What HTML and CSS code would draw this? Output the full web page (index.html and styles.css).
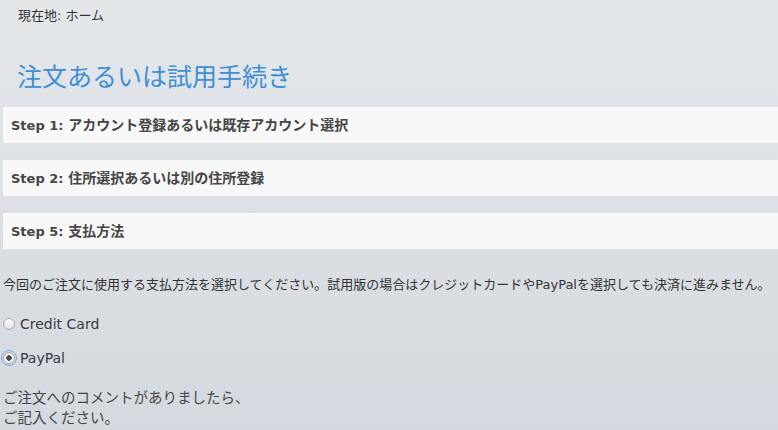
FILE: index.html
```html
<!DOCTYPE html>
<html lang="ja">
<head>
  <meta charset="UTF-8">
  <title>注文あるいは試用手続き</title>
  <link rel="stylesheet" href="styles.css">
</head>
<body>
  <div class="page">
    <!-- Breadcrumb -->
    <div class="breadcrumb">現在地: ホーム</div>

    <h1 class="title">注文あるいは試用手続き</h1>

    <!-- Checkout steps -->
    <div class="steps">
      <div class="step"><span class="step-no">Step 1:</span> アカウント登録あるいは既存アカウント選択</div>
      <div class="step"><span class="step-no">Step 2:</span> 住所選択あるいは別の住所登録</div>
      <div class="step"><span class="step-no">Step 5:</span> 支払方法</div>
    </div>

    <p class="note">今回のご注文に使用する支払方法を選択してください。試用版の場合はクレジットカードやPayPalを選択しても決済に進みません。</p>

    <div class="pay-options">
      <label class="pay-option">
        <input type="radio" name="payment" value="cc">
        <span>Credit Card</span>
      </label>
      <label class="pay-option focused">
        <input type="radio" name="payment" value="paypal" checked>
        <span>PayPal</span>
      </label>
    </div>

    <p class="comment">ご注文へのコメントがありましたら、<br>ご記入ください。</p>
  </div>
</body>
</html>
```

FILE: styles.css
```css
/* === Base === */
* {
  box-sizing: border-box;
  margin: 0;
  padding: 0;
}
html, body {
  width: 100%;
  height: 100%;
}
body {
  font-family: "DejaVu Sans", "Noto Sans CJK JP", sans-serif;
  color: #333;
  background: linear-gradient(to bottom, #e4e7ea 0%, #d4d9df 100%);
  overflow: hidden;
}

.page {
  padding: 8px 0 0 3px;
}

/* === Breadcrumb === */
.breadcrumb {
  padding-left: 15px;
  font-size: 13px;
  line-height: 16px;
  color: #333;
}

/* === Page title === */
.title {
  margin: 39px 0 0 14px;
  font-size: 25px;
  font-weight: normal;
  line-height: 30px;
  color: #3d8fd8;
}

/* === Step bars === */
.steps {
  margin-top: 14px;
  display: flex;
  flex-direction: column;
  gap: 17px;
}
.step {
  height: 36px;
  line-height: 36px;
  padding-left: 8px;
  background: #f8f8f8;
  font-size: 14px;
  font-weight: bold;
  color: #454545;
}
.step-no {
  font-size: 13px;
}

/* === Payment section === */
.note {
  margin-top: 27px;
  font-size: 13px;
  line-height: 18px;
  color: #333;
}

.pay-options {
  margin-top: 20px;
  display: flex;
  flex-direction: column;
  gap: 14px;
}
.pay-option {
  display: flex;
  align-items: center;
  gap: 5px;
  font-size: 14px;
  line-height: 20px;
  color: #3a3a3a;
}
.pay-option input {
  appearance: none;
  -webkit-appearance: none;
  width: 12px;
  height: 12px;
  margin: 0;
  border: 1px solid #a9a9a9;
  border-radius: 50%;
  background: linear-gradient(to bottom, #fdfdfd, #e2e2e2);
}
.pay-option input:checked {
  background: radial-gradient(circle, #4a4a4a 0 2.5px, #f2f2f2 3px);
}
.pay-option.focused input {
  outline: 1px solid #7ba6e6;
  outline-offset: 1px;
}

.comment {
  margin-top: 20px;
  font-size: 14.5px;
  line-height: 20px;
  color: #444;
}
```
